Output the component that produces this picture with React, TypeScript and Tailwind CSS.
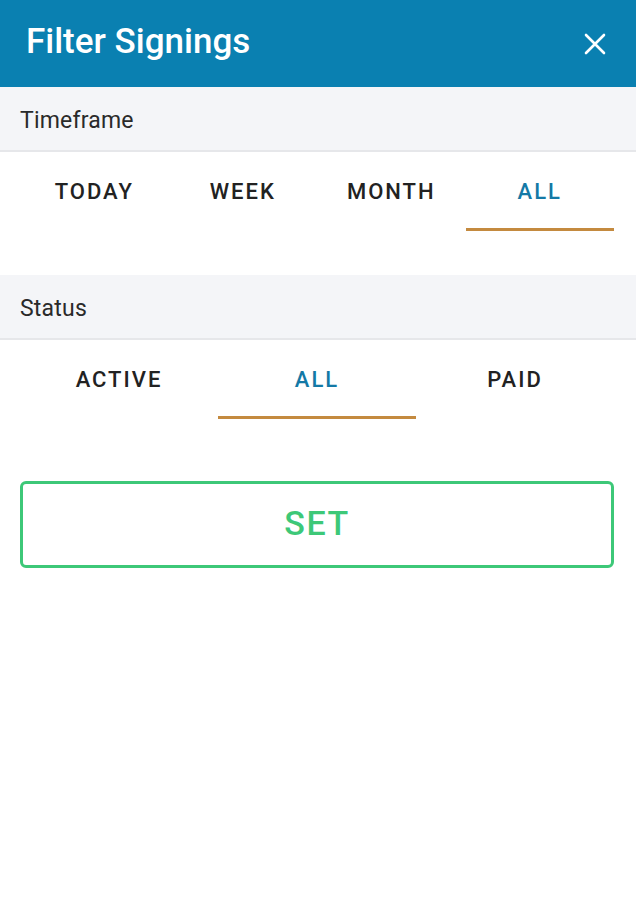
import { useState } from 'react';

const font = { fontFamily: 'Roboto, "Noto Sans", sans-serif' };

function Tabs({
  items,
  active,
  onPick,
}: {
  items: string[];
  active: string;
  onPick: (v: string) => void;
}) {
  return (
    <div
      className="grid h-[79px] pl-[20px] pr-[22px]"
      style={{ gridTemplateColumns: `repeat(${items.length}, minmax(0, 1fr))` }}
    >
      {items.map((item) => {
        const on = item === active;
        return (
          <button
            key={item}
            onClick={() => onPick(item)}
            className={`relative flex items-start justify-center pt-[23px] text-[22px] font-medium tracking-[2px] ${
              on ? 'text-[#1479a6]' : 'text-[#222]'
            }`}
          >
            {item}
            {on ? <span className="absolute bottom-0 left-0 right-0 h-[3px] bg-[#c48a3f]" /> : null}
          </button>
        );
      })}
    </div>
  );
}

function SectionLabel({ children }: { children: string }) {
  return (
    <div className="flex h-[65px] items-center border-b-2 border-[#e6e7ea] bg-[#f4f5f8] px-[20px] pt-[5px]">
      <span className="text-[23px] tracking-[0.2px] text-[#2a2a2a]">{children}</span>
    </div>
  );
}

export default function App() {
  const [timeframe, setTimeframe] = useState('ALL');
  const [status, setStatus] = useState('ALL');

  return (
    <div className="min-h-[900px] w-[636px] bg-white" style={font}>
      <div className="flex h-[87px] items-center justify-between bg-[#0a80b1] pl-[26px] pr-[30px]">
        <h1 className="pb-[2px] text-[35px] font-medium text-white">Filter Signings</h1>
        <svg width="22" height="22" viewBox="0 0 22 22" fill="none" stroke="white" strokeWidth="2.6" strokeLinecap="round">
          <path d="M2 2 L20 20 M20 2 L2 20" />
        </svg>
      </div>

      <SectionLabel>Timeframe</SectionLabel>
      <Tabs items={['TODAY', 'WEEK', 'MONTH', 'ALL']} active={timeframe} onPick={setTimeframe} />

      <div className="h-[44px]" />

      <SectionLabel>Status</SectionLabel>
      <Tabs items={['ACTIVE', 'ALL', 'PAID']} active={status} onPick={setStatus} />

      <div className="pl-[20px] pr-[22px] pt-[62px]">
        <button className="flex h-[87px] w-full items-center justify-center rounded-[6px] border-[3px] border-[#3dc878] pb-[2px] text-[34px] font-medium tracking-[1.5px] text-[#3dc878]">
          SET
        </button>
      </div>
    </div>
  );
}
